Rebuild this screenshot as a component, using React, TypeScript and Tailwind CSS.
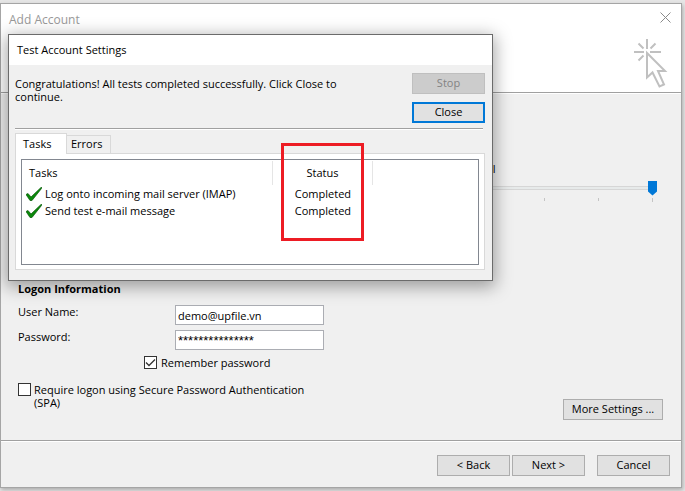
import React, { useState } from 'react';
import clsx from 'clsx';

const tasks = [
  { name: 'Log onto incoming mail server (IMAP)', status: 'Completed' },
  { name: 'Send test e-mail message', status: 'Completed' },
];

type ButtonProps = React.ButtonHTMLAttributes<HTMLButtonElement>;

const Button: React.FC<ButtonProps> = ({ className, ...props }) => (
  <button
    type="button"
    className={clsx('h-[21px] shrink-0 flex items-center justify-center whitespace-nowrap', className)}
    {...props}
  />
);

const Divider: React.FC = () => (
  <div className="h-[2px] border-t border-[#a0a0a0] bg-white" />
);

const CursorIcon: React.FC = () => (
  <svg width="36" height="52" viewBox="0 0 36 52" fill="none" stroke="#c0c0c0" strokeWidth="2" aria-hidden="true">
    <path d="M14 1v10M1 14h10M17 14h11M5.5 5.500l5 5M22.500 5.500l-5 5M5.500 22.500l5-5" />
    <path d="M14 15v24.500l5.500-5 7 14 4.500-2-6-13.500h7z" />
  </svg>
);

const TaskCheck: React.FC = () => (
  <svg width="16" height="14" viewBox="0 0 16 14" aria-hidden="true">
    <path d="M0 7.500l2-1 3 3.500L15.500 0v1.500L6 13.500H4z" fill="#0a8a0a" stroke="#075807" strokeWidth="0.700" />
  </svg>
);

const Checkbox: React.FC<{ id: string; defaultChecked?: boolean }> = ({ id, defaultChecked }) => (
  <span className="grid size-[13px] shrink-0">
    <input
      id={id}
      type="checkbox"
      defaultChecked={defaultChecked}
      className="peer appearance-none col-start-1 row-start-1 size-[13px] border border-[#333333] bg-white"
    />
    <svg
      viewBox="0 0 13 13"
      className="pointer-events-none hidden peer-checked:block col-start-1 row-start-1 size-[13px]"
      fill="none"
      stroke="#333333"
      strokeWidth="1.300"
      aria-hidden="true"
    >
      <path d="M2 6.500l3 3 6-6" />
    </svg>
  </span>
);

const OfflineSlider: React.FC = () => (
  <div className="ml-auto mr-[24px] w-[225px]">
    <label htmlFor="offline" className="block pl-[51px] leading-[14px]">All</label>
    <input
      id="offline"
      type="range"
      min={0}
      max={4}
      defaultValue={4}
      className="mt-[4px] block h-[15px] w-full appearance-none bg-transparent [&::-webkit-slider-runnable-track]:h-[4px] [&::-webkit-slider-runnable-track]:border-y [&::-webkit-slider-runnable-track]:border-[#d6d6d6] [&::-webkit-slider-runnable-track]:bg-[#e7eaea] [&::-webkit-slider-thumb]:appearance-none [&::-webkit-slider-thumb]:-mt-[6px] [&::-webkit-slider-thumb]:h-[15px] [&::-webkit-slider-thumb]:w-[9px] [&::-webkit-slider-thumb]:bg-[#0078d7] [&::-webkit-slider-thumb]:[clip-path:polygon(0_0,100%_0,100%_73%,50%_100%,0_73%)]"
    />
    <div className="mt-[3px] flex justify-between px-[4px]">
      {[0, 1, 2, 3, 4].map((tick) => (
        <span key={tick} className="h-[3px] w-px bg-[#c4c4c4] last:h-[4px]" />
      ))}
    </div>
  </div>
);

const LogonForm: React.FC = () => {
  const [user, setUser] = useState('demo@upfile.vn');
  const [password, setPassword] = useState('***************');

  return (
    <form className="px-[17px]">
      <h2 className="font-bold leading-[14px]">Logon Information</h2>
      <div className="mt-[9px] grid grid-cols-[157px_149px] gap-y-[5px]">
        <label htmlFor="user" className="leading-[14px]">User Name:</label>
        <input
          id="user"
          type="text"
          value={user}
          onChange={(e) => setUser(e.target.value)}
          className="h-[20px] border border-[#abadb3] bg-white px-[2px]"
        />
        <label htmlFor="password" className="leading-[14px]">Password:</label>
        <input
          id="password"
          type="text"
          autoComplete="off"
          value={password}
          onChange={(e) => setPassword(e.target.value)}
          className="h-[20px] border border-[#abadb3] bg-white px-[2px] font-['Liberation_Sans',sans-serif] text-[13px]"
        />
      </div>
      <div className="mt-[6px] flex gap-[4px] pl-[126px]">
        <Checkbox id="remember" defaultChecked />
        <label htmlFor="remember" className="leading-[14px]">Remember password</label>
      </div>
      <div className="mt-[13px] flex items-start justify-between">
        <div className="flex gap-[3px]">
          <Checkbox id="spa" />
          <label htmlFor="spa" className="w-[285px] leading-[13px]">
            Require logon using Secure Password Authentication (SPA)
          </label>
        </div>
        <Button className="mt-[16px] mr-px w-[100px] border border-[#adadad] bg-[#e1e1e1]">More Settings ...</Button>
      </div>
    </form>
  );
};

const TestDialog: React.FC = () => (
  <div
    role="dialog"
    aria-labelledby="test-title"
    className="absolute left-[8px] right-[192px] top-[34px] border border-[#6b6b6b] bg-[#f0f0f0] pb-[10px] shadow-[0_4px_16px_2px_rgba(0,0,0,0.35)]"
  >
    <h2 id="test-title" className="bg-white px-[8px] text-[11px] leading-[30px]">Test Account Settings</h2>
    <div className="px-[6px]">
      <div className="mt-[8px] flex justify-between">
        <p className="mt-[4px] w-[340px] leading-[13px]">
          Congratulations! All tests completed successfully. Click Close to continue.
        </p>
        <div className="mr-px flex flex-col gap-[8px]">
          <Button disabled className="w-[73px] border border-[#bfbfbf] bg-[#cccccc] text-[#838383]">Stop</Button>
          <Button className="w-[73px] border-2 border-[#0078d7] bg-[#e1e1e1]">Close</Button>
        </div>
      </div>
      <div className="mt-[5px] mr-[3px]"><Divider /></div>
      <div role="tablist" className="mt-[3px] flex items-end">
        <button
          type="button"
          role="tab"
          aria-selected="true"
          className="z-10 -mb-px h-[21px] w-[52px] border border-b-0 border-[#d9d9d9] bg-white pl-[7px] text-left"
        >
          Tasks
        </button>
        <button
          type="button"
          role="tab"
          aria-selected="false"
          className="h-[18px] w-[44px] border border-b-0 border-l-0 border-[#d9d9d9] pl-[4px] text-left"
        >
          Errors
        </button>
      </div>
      <div role="tabpanel" className="mr-[1px] border border-[#d9d9d9] bg-white px-[5px] pt-[5px] pb-[4px]">
        <div className="h-[106px] border border-[#828790]">
          <table className="w-full table-fixed border-collapse">
            <thead>
              <tr className="h-[25px]">
                <th className="w-[55%] p-0 text-left font-normal">
                  <div className="h-[24px] border-r border-[#e5e5e5] pl-[7px] leading-[24px]">Tasks</div>
                </th>
                <th className="relative w-[22%] p-0 font-normal">
                  <div className="h-[24px] border-r border-[#e5e5e5] leading-[24px]">Status</div>
                  <span className="pointer-events-none absolute left-[8px] -top-[17px] h-[98px] w-[83px] border-[3px] border-[#ed1c24]" />
                </th>
                <th className="p-0" />
              </tr>
            </thead>
            <tbody>
              {tasks.map((task) => (
                <tr key={task.name} className="h-[17px]">
                  <td className="p-0">
                    <div className="flex items-center gap-[3px] pl-[4px] leading-[17px]">
                      <TaskCheck />
                      {task.name}
                    </div>
                  </td>
                  <td className="p-0 text-center leading-[17px]">{task.status}</td>
                  <td className="p-0" />
                </tr>
              ))}
            </tbody>
          </table>
        </div>
      </div>
    </div>
  </div>
);

const App: React.FC = () => {
  return (
    <div className="relative min-h-screen bg-[#e6e6e6] pt-[3px] pr-[3px] pb-[3px] font-['Open_Sans','Noto_Sans',sans-serif] text-[11px] text-black">
      <div className="border border-[#a5a5a5] bg-[#f0f0f0] shadow-[1px_2px_4px_rgba(0,0,0,0.25)]">
        <header className="h-[88px] bg-white">
          <div className="flex items-start justify-between pl-[8px] pr-[10px] pt-[8px]">
            <h1 className="text-[12px] leading-[16px] text-[#999999]">Add Account</h1>
            <button type="button" aria-label="Close window">
              <svg width="11" height="11" viewBox="0 0 11 11" fill="none" stroke="#8a8a8a" aria-hidden="true">
                <path d="M0.500 0.500l10 10M10.500 0.500l-10 10" />
              </svg>
            </button>
          </div>
          <div className="mt-[10px] flex justify-end pr-[12px]">
            <CursorIcon />
          </div>
        </header>
        <Divider />
        <main className="pt-[68px] pb-[20px]">
          <OfflineSlider />
          <div className="mt-[80px]">
            <LogonForm />
          </div>
        </main>
        <Divider />
        <footer className="flex justify-end pt-[13px] pr-[11px] pb-[11px]">
          <Button className="w-[73px] border border-[#adadad] bg-[#e1e1e1]">&lt; Back</Button>
          <Button className="ml-[2px] w-[73px] border border-[#adadad] bg-[#e1e1e1]">Next &gt;</Button>
          <Button className="ml-[12px] w-[73px] border border-[#adadad] bg-[#e1e1e1]">Cancel</Button>
        </footer>
      </div>
      <TestDialog />
    </div>
  );
};

export default App;
